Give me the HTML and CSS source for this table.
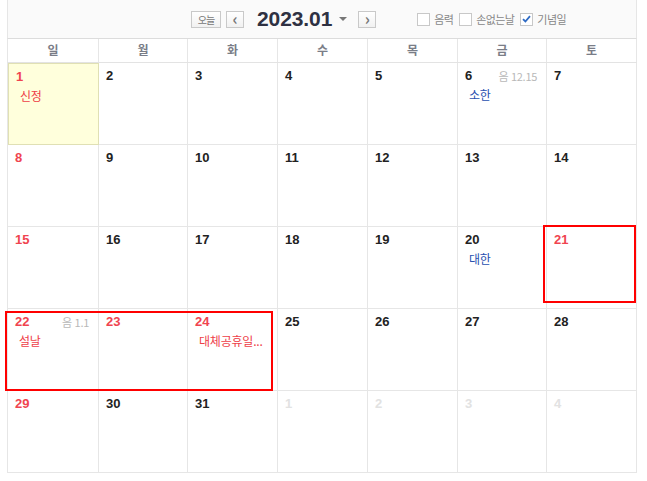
FILE: index.html
```html
<!DOCTYPE html>
<html lang="ko">

<head>
    <meta charset="UTF-8">
    <meta name="viewport" content="width=device-width, initial-scale=1.0">
    <title>달력</title>
    <link rel="stylesheet" href="styles.css">
</head>

<body>
    <div class="main">
        <div class="toolbar">
            <span class="btn today">오늘</span>
            <span class="btn arrow">&lsaquo;</span>
            <span class="title">2023.01</span>
            <span class="caret"></span>
            <span class="btn arrow">&rsaquo;</span>
            <div class="opts">
                <label class="opt"><i class="chk"></i>음력</label>
                <label class="opt"><i class="chk"></i>손없는날</label>
                <label class="opt"><i class="chk on"><svg width="9" height="8" viewBox="0 0 9 8"><path d="M1 4.2 L3.4 6.5 L8 1.2" fill="none" stroke="#2f6bc4" stroke-width="1.8"/></svg></i>기념일</label>
            </div>
        </div>

        <div class="week">
            <div>일</div><div>월</div><div>화</div><div>수</div><div>목</div><div>금</div><div>토</div>
        </div>

        <div class="days">
            <div class="day sun today-cell"><b>1</b><p class="hol">신정</p></div>
            <div class="day"><b>2</b></div>
            <div class="day"><b>3</b></div>
            <div class="day"><b>4</b></div>
            <div class="day"><b>5</b></div>
            <div class="day"><b>6</b><span class="lunar">음 12.15</span><p class="term">소한</p></div>
            <div class="day"><b>7</b></div>

            <div class="day sun"><b>8</b></div>
            <div class="day"><b>9</b></div>
            <div class="day"><b>10</b></div>
            <div class="day"><b>11</b></div>
            <div class="day"><b>12</b></div>
            <div class="day"><b>13</b></div>
            <div class="day"><b>14</b></div>

            <div class="day sun"><b>15</b></div>
            <div class="day"><b>16</b></div>
            <div class="day"><b>17</b></div>
            <div class="day"><b>18</b></div>
            <div class="day"><b>19</b></div>
            <div class="day"><b>20</b><p class="term">대한</p></div>
            <div class="day sun"><b>21</b></div>

            <div class="day sun"><b>22</b><span class="lunar">음 1.1</span><p class="hol">설날</p></div>
            <div class="day sun"><b>23</b></div>
            <div class="day sun"><b>24</b><p class="hol">대체공휴일...</p></div>
            <div class="day"><b>25</b></div>
            <div class="day"><b>26</b></div>
            <div class="day"><b>27</b></div>
            <div class="day"><b>28</b></div>

            <div class="day sun"><b>29</b></div>
            <div class="day"><b>30</b></div>
            <div class="day"><b>31</b></div>
            <div class="day other"><b>1</b></div>
            <div class="day other"><b>2</b></div>
            <div class="day other"><b>3</b></div>
            <div class="day other"><b>4</b></div>
        </div>

        <!-- 표시 박스 -->
        <div class="mark mark1"></div>
        <div class="mark mark2"></div>
    </div>
</body>

</html>
```

FILE: styles.css
```css
* {
    padding: 0;
    margin: 0;
    box-sizing: border-box;
}

body {
    background: #fff;
    font-family: "Liberation Sans", "Noto Sans CJK KR", sans-serif;
}

.main {
    position: relative;
    width: 647px;
    height: 481px;
}

.toolbar {
    margin-left: 7px;
    width: 630px;
    height: 39px;
    background: #fafafa;
    border-left: 1px solid #e6e6e6;
    border-right: 1px solid #e6e6e6;
    border-bottom: 1px solid #dcdcdc;
    display: flex;
    align-items: center;
    padding-left: 183px;
}

.btn {
    height: 17px;
    border: 1px solid #c9c9c9;
    background: linear-gradient(#fff, #f1f1f1);
    color: #777;
    display: flex;
    align-items: center;
    justify-content: center;
    font-family: "Noto Sans CJK KR", sans-serif;
}

.today {
    width: 30px;
    font-size: 10px;
    letter-spacing: -1px;
    margin-right: 5px;
}

.arrow {
    width: 18px;
    font-size: 16px;
    font-weight: bold;
    line-height: 1;
    padding-bottom: 2px;
}

.title {
    font-size: 21px;
    font-weight: bold;
    color: #2e3142;
    margin-left: 13px;
    letter-spacing: -0.1px;
}

.caret {
    width: 0;
    height: 0;
    border-left: 4px solid transparent;
    border-right: 4px solid transparent;
    border-top: 4px solid #777;
    margin: 0 11px 0 7px;
}

.opts {
    display: flex;
    align-items: center;
    margin-left: 41px;
}

.opt {
    display: flex;
    align-items: center;
    font-family: "Noto Sans CJK KR", sans-serif;
    font-size: 11px;
    color: #888;
    letter-spacing: -0.6px;
    margin-right: 6px;
}

.chk {
    width: 13px;
    height: 13px;
    border: 1px solid #c8c8c8;
    background: #fff;
    margin-right: 4px;
    display: flex;
    align-items: center;
    justify-content: center;
}

.week {
    margin-left: 7px;
    width: 630px;
    height: 24px;
    display: grid;
    grid-template-columns: 91px 89px 90px 90px 90px 89px 1fr;
    border-left: 1px solid #e6e6e6;
    border-bottom: 1px solid #e3e3e3;
}

.week div {
    border-right: 1px solid #e6e6e6;
    text-align: center;
    font-family: "Noto Sans CJK KR", sans-serif;
    font-size: 12px;
    font-weight: bold;
    color: #7a7d87;
    line-height: 22px;
}

.days {
    margin-left: 7px;
    width: 630px;
    display: grid;
    grid-template-columns: 91px 89px 90px 90px 90px 89px 1fr;
    grid-auto-rows: 82px;
    border-left: 1px solid #e6e6e6;
}

.day {
    position: relative;
    border-right: 1px solid #e6e6e6;
    border-bottom: 1px solid #e6e6e6;
    padding: 5px 0 0 7px;
}

.day b {
    display: block;
    font-size: 13px;
    line-height: 16px;
    color: #222;
}

.day.sun b {
    color: #f0444f;
}

.day.other b {
    color: #e2e2e2;
}

.today-cell {
    background: #ffffdc;
    border: 1px solid #e0e0b4;
}

.day p {
    font-family: "Noto Sans CJK KR", sans-serif;
    font-size: 12px;
    line-height: 16px;
    margin: 3px 0 0 4px;
    letter-spacing: -0.2px;
}

.hol {
    color: #ee4048;
}

.term {
    color: #2850b0;
}

.lunar {
    position: absolute;
    top: 5px;
    right: 9px;
    font-family: "Noto Sans CJK KR", sans-serif;
    font-size: 11px;
    letter-spacing: -0.3px;
    color: #b8b8b8;
}

.mark {
    position: absolute;
    border: 2px solid #f00;
}

.mark1 {
    left: 543px;
    top: 225px;
    width: 93px;
    height: 78px;
}

.mark2 {
    left: 5px;
    top: 311px;
    width: 268px;
    height: 80px;
}
```
